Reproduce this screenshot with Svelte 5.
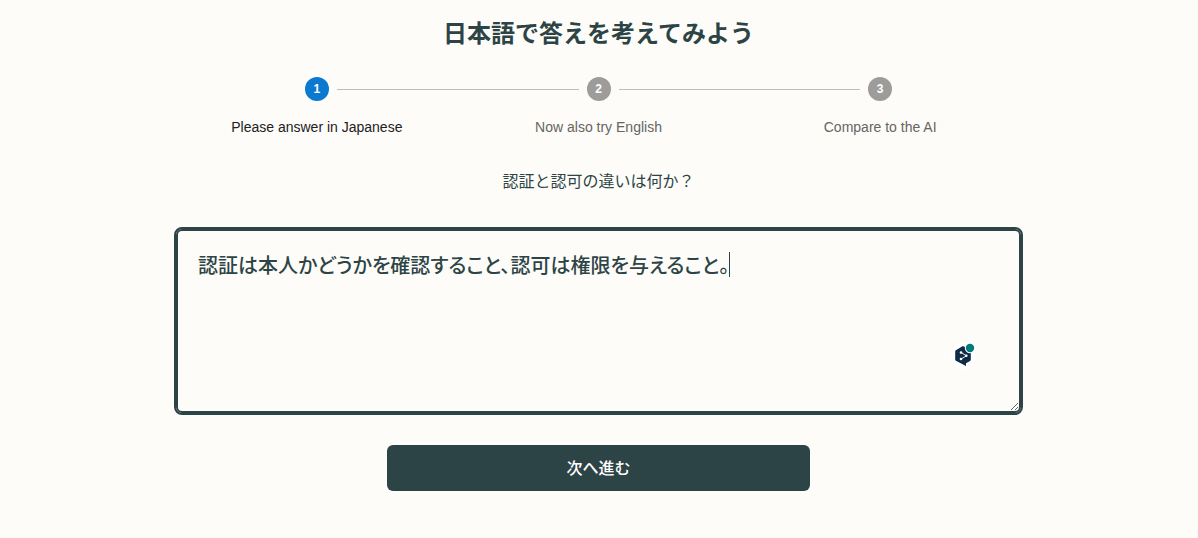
<script>
  const steps = ['Please answer in Japanese', 'Now also try English', 'Compare to the AI'];
  let current = $state(0);
  let answer = $state('認証は本人かどうかを確認すること、認可は権限を与えること。');
</script>

<main>
  <h1>日本語で答えを考えてみよう</h1>

  <ol class="stepper">
    {#each steps as label, i}
      <li class:active={i === current}>
        <span class="dot">{i + 1}</span>
        <span class="label">{label}</span>
      </li>
    {/each}
  </ol>

  <label class="question" for="answer">認証と認可の違いは何か？</label>

  <div class="field">
    <textarea id="answer" rows="5" spellcheck="false" bind:value={answer}></textarea>
    <span class="caret" aria-hidden="true"></span>
    <button class="assist" type="button" aria-label="DeepL">
      <svg viewBox="0 0 30 30" width="30" height="30" aria-hidden="true">
        <circle cx="15" cy="15" r="13" fill="#fff" />
        <path d="M14.4 5.3 Q15 5 15.6 5.3 L22 9.2 Q22.8 9.7 22.8 10.6 V18.6 Q22.8 19.4 22.1 19.9 L18 22.3 V25 L7.9 19.8 Q7.2 19.4 7.2 18.6 V10.6 Q7.2 9.7 7.9 9.2 Z" fill="#0f2b46" />
        <path d="M13 11.5 L18.5 14.8 L13 18" fill="none" stroke="#fff" stroke-width="0.9" />
        <circle cx="13" cy="11.5" r="1.3" fill="#fff" />
        <circle cx="18.3" cy="14.8" r="1.3" fill="#fff" />
        <circle cx="13" cy="18" r="1.3" fill="#fff" />
        <circle cx="22" cy="7" r="5.2" fill="#fff" />
        <circle cx="22" cy="7" r="4.2" fill="#007c78" />
      </svg>
    </button>
  </div>

  <button class="next" type="button" onclick={() => (current = Math.min(current + 1, 2))}>次へ進む</button>
</main>

<style>
  :global(body) {
    background: #fdfcf8;
  }

  main {
    box-sizing: border-box;
    max-width: 878px;
    margin: 0 auto;
    padding: 16px 17px 32px 16px;
    display: flex;
    flex-direction: column;
    color: #2d4446;
    font-family: 'Noto Sans CJK JP', sans-serif;
  }

  h1 {
    margin: 0 0 29px;
    font-size: 24px;
    line-height: 32px;
    font-weight: 700;
    text-align: center;
  }

  .stepper {
    display: flex;
    margin: 0;
    padding: 0;
    list-style: none;
    font-family: 'Liberation Sans', Arial, sans-serif;
  }

  li {
    position: relative;
    flex: 1;
    display: flex;
    flex-direction: column;
    align-items: center;
    gap: 16px;
    color: #666563;
  }

  li + li::before {
    content: '';
    position: absolute;
    top: 12px;
    left: calc(-50% + 20px);
    right: calc(50% + 20px);
    border-top: 1px solid #bdbdbd;
  }

  .dot {
    width: 24px;
    height: 24px;
    border-radius: 50%;
    background: #9d9c9a;
    color: #fff;
    font: 700 12px/24px 'Liberation Sans', Arial, sans-serif;
    text-align: center;
  }

  .label {
    font-size: 14px;
    line-height: 20px;
  }

  .active {
    color: #21201f;
  }

  .active .dot {
    background: #0b79d0;
  }

  .question {
    margin: 31px 0 37px;
    font-size: 16px;
    line-height: 24px;
    text-align: center;
  }

  .field {
    position: relative;
    display: flex;
  }

  textarea {
    box-sizing: border-box;
    width: 100%;
    margin: 0;
    padding: 20px;
    border: 2px solid #2d4446;
    border-radius: 6px;
    outline: 2px solid #2d4446;
    background: transparent;
    color: inherit;
    font: 500 20px/28px 'Noto Sans CJK JP', sans-serif;
    font-feature-settings: 'palt', 'kern';
    resize: vertical;
  }

  .caret {
    position: absolute;
    top: 23px;
    left: 553px;
    width: 1px;
    height: 25px;
    background: #2d4446;
  }

  .assist {
    position: absolute;
    right: 43px;
    bottom: 42px;
    width: 30px;
    height: 30px;
    padding: 0;
    border: 0;
    background: none;
  }

  .assist svg {
    display: block;
  }

  .next {
    align-self: center;
    width: 50%;
    margin-top: 32px;
    padding: 10px 16px 12px;
    border: 0;
    border-radius: 6px;
    background: #2d4446;
    color: #fff;
    font: 500 16px/24px 'Noto Sans CJK JP', sans-serif;
  }
</style>
